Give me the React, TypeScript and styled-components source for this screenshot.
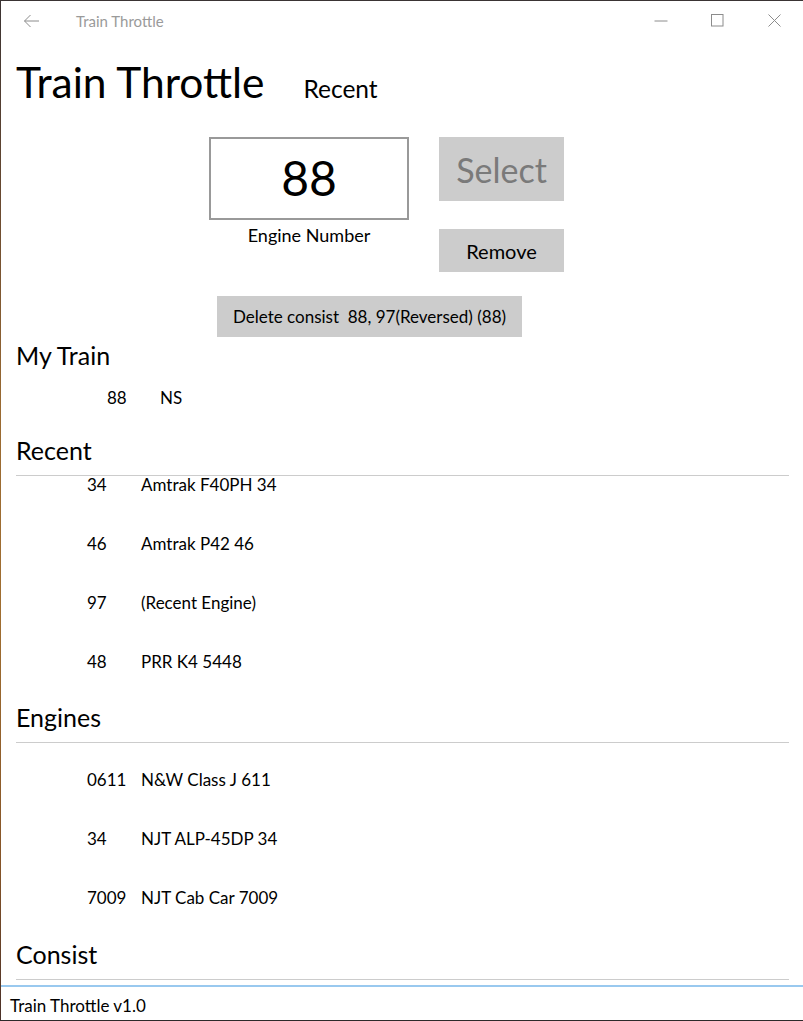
import React from "react";
import styled, { createGlobalStyle } from "styled-components";

const Global = createGlobalStyle`
  html, body { margin: 0; padding: 0; background: #fff; overflow: hidden; }
  * { box-sizing: border-box; }
`;

const FONT = `"Segoe UI", Lato, "Open Sans", sans-serif`;

const Frame = styled.div`
  width: 803px;
  height: 1021px;
  border-top: 1px solid #3a3434;
  border-bottom: 1px solid #2c2a2a;
  padding-left: 1px;
  background:
    linear-gradient(to bottom, #3b3333 0%, #6a4a30 20%, #9a6a32 40%, #a06e30 60%, #855428 85%, #4a3028 100%) left top / 1px 100% no-repeat,
    #fff;
  display: flex;
  flex-direction: column;
  font-family: ${FONT};
  color: #000;
`;

const TitleBar = styled.div`
  height: 31px;
  padding-top: 8px;
  display: flex;
  align-items: center;
  flex-shrink: 0;
`;

const BackButton = styled.div`
  width: 60px;
  height: 23px;
  display: flex;
  align-items: center;
  justify-content: center;
`;

const WindowTitle = styled.div`
  margin-left: 15px;
  font-size: 15px;
  color: #9a9a9a;
  flex: 1;
`;

const WindowButton = styled.div`
  width: 57px;
  height: 23px;
  display: flex;
  align-items: center;
  justify-content: center;
`;

const Content = styled.div`
  flex: 1;
  min-height: 0;
  overflow: hidden;
  padding: 0 14px 0 15px;
  display: flex;
  flex-direction: column;
`;

const HeaderRow = styled.div`
  display: flex;
  align-items: baseline;
  margin-top: 22px;
  height: 56px;
`;

const AppTitle = styled.h1`
  margin: 0;
  font-weight: 400;
  font-size: 42.5px;
  line-height: 56px;
`;

const PageName = styled.div`
  margin-left: 39px;
  font-size: 24.5px;
`;

const ControlsRow = styled.div`
  display: flex;
  align-items: flex-start;
  margin-top: 27px;
  margin-left: 193px;
`;

const InputColumn = styled.div`
  display: flex;
  flex-direction: column;
  align-items: center;
  width: 200px;
`;

const NumberBox = styled.div`
  width: 200px;
  height: 83px;
  border: 2px solid #999;
  display: flex;
  align-items: center;
  justify-content: center;
  font-size: 48px;
  padding-bottom: 2px;
`;

const InputLabel = styled.div`
  margin-top: 4px;
  font-size: 18px;
  line-height: 22px;
`;

const ButtonColumn = styled.div`
  display: flex;
  flex-direction: column;
  gap: 28px;
  margin-left: 30px;
`;

const Button = styled.div<{ $h: number; $size: number; $muted?: boolean; $w: number }>`
  width: ${(p) => p.$w}px;
  height: ${(p) => p.$h}px;
  background: #cccccc;
  display: flex;
  align-items: center;
  justify-content: center;
  font-size: ${(p) => p.$size}px;
  color: ${(p) => (p.$muted ? "#7a7a7a" : "#000")};
  white-space: pre;
`;

const DeleteRow = styled.div`
  margin-top: 24px;
  margin-left: 201px;
`;

const SectionTitle = styled.div<{ $gap?: number }>`
  font-size: 25px;
  line-height: 32px;
  height: 32px;
  margin-top: ${(p) => p.$gap ?? 0}px;
  flex-shrink: 0;
`;

const Divider = styled.div`
  margin-top: 9px;
  height: 1px;
  background: #cccccc;
  flex-shrink: 0;
`;

const TrainRow = styled.div`
  display: flex;
  height: 63px;
  padding-top: 16px;
  padding-left: 91px;
  font-size: 17px;
  line-height: 22px;
  flex-shrink: 0;
`;

const TrainNumber = styled.div`
  width: 53px;
`;

const ListViewport = styled.div<{ $h: number }>`
  height: ${(p) => p.$h}px;
  overflow: hidden;
  flex-shrink: 0;
`;

const ListInner = styled.div<{ $offset: number }>`
  margin-top: ${(p) => p.$offset}px;
`;

const ListRow = styled.div`
  display: flex;
  align-items: center;
  height: 59px;
  padding-left: 71px;
  font-size: 17px;
  line-height: 22px;
`;

const RowNumber = styled.div`
  width: 54px;
`;

const StatusBar = styled.div`
  height: 35px;
  border-top: 2px solid #99c9ef;
  padding-left: 9px;
  padding-top: 3px;
  display: flex;
  align-items: center;
  font-size: 17px;
  flex-shrink: 0;
`;

const recent = [
  ["34", "Amtrak F40PH 34"],
  ["46", "Amtrak P42 46"],
  ["97", "(Recent Engine)"],
  ["48", "PRR K4 5448"],
];

const engines = [
  ["0611", "N&W Class J 611"],
  ["34", "NJT ALP-45DP 34"],
  ["7009", "NJT Cab Car 7009"],
];

const ic = { stroke: "#8c8c8c", strokeWidth: 1, fill: "none" } as const;

export default function App() {
  return (
    <>
      <Global />
      <Frame>
        <TitleBar>
          <BackButton>
            <svg width="17" height="14" viewBox="0 0 17 14">
              <path d="M16 7H1.5M7.5 1L1.5 7l6 6" {...ic} />
            </svg>
          </BackButton>
          <WindowTitle>Train Throttle</WindowTitle>
          <WindowButton>
            <svg width="14" height="2" viewBox="0 0 14 2">
              <path d="M0.5 1H13.5" {...ic} />
            </svg>
          </WindowButton>
          <WindowButton>
            <svg width="13" height="13" viewBox="0 0 13 13">
              <rect x="0.5" y="0.5" width="11.5" height="11.5" {...ic} />
            </svg>
          </WindowButton>
          <WindowButton>
            <svg width="13" height="13" viewBox="0 0 13 13">
              <path d="M0.5 0.5L12.5 12.5M12.5 0.5L0.5 12.5" {...ic} />
            </svg>
          </WindowButton>
        </TitleBar>
        <Content>
          <HeaderRow>
            <AppTitle>Train Throttle</AppTitle>
            <PageName>Recent</PageName>
          </HeaderRow>
          <ControlsRow>
            <InputColumn>
              <NumberBox>88</NumberBox>
              <InputLabel>Engine Number</InputLabel>
            </InputColumn>
            <ButtonColumn>
              <Button $w={125} $h={64} $size={34} $muted>
                Select
              </Button>
              <Button $w={125} $h={43} $size={20}>
                Remove
              </Button>
            </ButtonColumn>
          </ControlsRow>
          <DeleteRow>
            <Button $w={305} $h={41} $size={17}>
              {"Delete consist  88, 97(Reversed) (88)"}
            </Button>
          </DeleteRow>
          <SectionTitle $gap={2}>My Train</SectionTitle>
          <TrainRow>
            <TrainNumber>88</TrainNumber>
            <div>NS</div>
          </TrainRow>
          <SectionTitle>Recent</SectionTitle>
          <Divider />
          <ListViewport $h={225}>
            <ListInner $offset={-21}>
              {recent.map(([n, name]) => (
                <ListRow key={n + name}>
                  <RowNumber>{n}</RowNumber>
                  <div>{name}</div>
                </ListRow>
              ))}
            </ListInner>
          </ListViewport>
          <SectionTitle>Engines</SectionTitle>
          <Divider />
          <ListViewport $h={195}>
            <ListInner $offset={7}>
              {engines.map(([n, name]) => (
                <ListRow key={n + name}>
                  <RowNumber>{n}</RowNumber>
                  <div>{name}</div>
                </ListRow>
              ))}
            </ListInner>
          </ListViewport>
          <SectionTitle>Consist</SectionTitle>
          <Divider />
        </Content>
        <StatusBar>Train Throttle v1.0</StatusBar>
      </Frame>
    </>
  );
}
